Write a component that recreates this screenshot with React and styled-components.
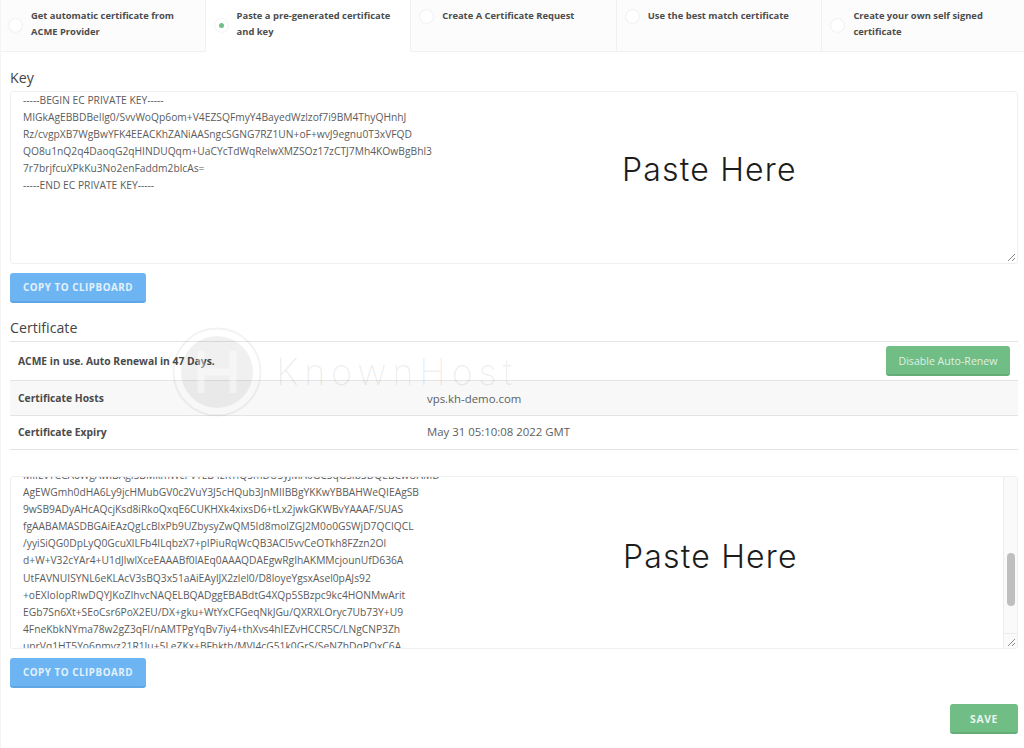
import React from 'react';
import styled, { createGlobalStyle } from 'styled-components';

const GlobalStyle = createGlobalStyle`
  html, body {
    margin: 0;
    padding: 0;
    background: #fff;
  }
  body {
    font-family: "Open Sans", "Liberation Sans", sans-serif;
    color: #555;
  }
  * {
    box-sizing: border-box;
  }
`;

const Page = styled.div`
  position: relative;
  width: 1024px;
  height: 748px;
  overflow: hidden;
  border-left: 1px solid #f4f4f4;
`;

const Tabs = styled.div`
  display: grid;
  grid-template-columns: repeat(4, 205.6px) 1fr;
  height: 52px;
  margin-left: -1px;
`;

const Tab = styled.div`
  display: flex;
  align-items: flex-start;
  padding: 8px 10px 0 9px;
  background: ${p => (p.$active ? '#fff' : '#fcfcfc')};
  border-right: 1px solid #f1f1f1;
  border-bottom: 1px solid ${p => (p.$active ? '#fff' : '#f1f1f1')};

  &:last-child {
    border-right: none;
  }
`;

const Radio = styled.span`
  flex: none;
  display: flex;
  align-items: center;
  justify-content: center;
  width: 13px;
  height: 13px;
  margin: ${p => (p.$twoLines ? '11px' : '2px')} 9px 0 0;
  border-radius: 50%;
  background: #fff;
  box-shadow: 0 0 2px rgba(0, 0, 0, 0.14);

  &::after {
    content: '';
    display: ${p => (p.$active ? 'block' : 'none')};
    width: 5px;
    height: 5px;
    border-radius: 50%;
    background: #6fbf87;
  }
`;

const TabLabel = styled.span`
  font-size: 9.4px;
  font-weight: 700;
  line-height: 16px;
  color: #4c4c4c;
`;

const Content = styled.div`
  padding: 0 6px 0 9px;
`;

const Heading = styled.h2`
  margin: 0;
  padding-top: ${p => p.$top}px;
  height: ${p => p.$top + 25}px;
  font-size: 14.2px;
  font-weight: 500;
  line-height: 24px;
  color: #444;
`;

const PasteBox = styled.div`
  position: relative;
  height: 173px;
  margin-top: ${p => p.$gap || 0}px;
  overflow: hidden;
  border: 1px solid #efefef;
  border-radius: 3px;
  background: #fff;
`;

const Code = styled.pre`
  margin: ${p => p.$offset}px 0 0;
  padding-left: 12px;
  font-family: "Open Sans", "Liberation Sans", sans-serif;
  font-size: 10.28px;
  line-height: 17.1px;
  color: #5c5c5c;
`;

const PasteHint = styled.div`
  position: absolute;
  left: ${p => p.$left}px;
  top: ${p => p.$top}px;
  font-family: Inter, "Open Sans", sans-serif;
  font-size: 32px;
  font-weight: 300;
  letter-spacing: 1.2px;
  line-height: 36px;
  white-space: nowrap;
  color: #1c1c1c;
`;

const Scrollbar = styled.div`
  position: absolute;
  top: 0;
  right: 0;
  bottom: 0;
  width: 14px;
  background: #fafafa;
  border-left: 1px solid #ececec;

  &::before {
    content: '';
    position: absolute;
    left: 3px;
    top: 76px;
    width: 8px;
    height: 53px;
    border-radius: 4px;
    background: #bfbfbf;
  }

  &::after {
    content: '';
    position: absolute;
    left: 0;
    right: 0;
    bottom: 14px;
    border-top: 1px solid #ececec;
  }
`;

const Grip = styled.svg`
  position: absolute;
  right: 1px;
  bottom: 1px;
  width: 9px;
  height: 9px;
`;

const CopyButton = styled.button`
  display: block;
  width: 136px;
  height: 30px;
  margin-top: 9px;
  padding: 1px 0 0;
  border: none;
  border-bottom: 2px solid #5ea6e4;
  border-radius: 3px;
  background: #6db5f2;
  font-family: inherit;
  font-size: 9.8px;
  font-weight: 700;
  letter-spacing: 0.55px;
  color: #e3f1fd;
`;

const Table = styled.div`
  border-top: 1px solid #e4e4e4;
`;

const Row = styled.div`
  display: grid;
  grid-template-columns: 409px 1fr;
  align-items: center;
  height: ${p => p.$height}px;
  padding-left: 8px;
  background: ${p => (p.$shaded ? '#f8f8f8' : 'transparent')};
  border-bottom: 1px solid #e4e4e4;
`;

const RenewRow = styled(Row)`
  display: flex;
  justify-content: space-between;
  padding-right: 8px;
`;

const ExpiryRow = styled(Row)`
  padding-bottom: 2px;
`;

const RowLabel = styled.span`
  font-size: 10.3px;
  font-weight: 700;
  color: #4a4a4a;
`;

const RowValue = styled.span`
  font-size: 11.4px;
  color: #606060;
`;

const RenewButton = styled.button`
  width: 124px;
  height: 30px;
  padding: 1px 0 0;
  border: none;
  border-bottom: 2px solid #64ad78;
  border-radius: 3px;
  background: #70bd85;
  font-family: inherit;
  font-size: 10.6px;
  color: #dff1e4;
`;

const Watermark = styled.div`
  position: absolute;
  left: 171px;
  top: 327px;
  display: flex;
  align-items: center;
  gap: 14px;
  pointer-events: none;
`;

const WatermarkName = styled.span`
  font-family: Inter, "Open Sans", sans-serif;
  font-size: 36px;
  font-weight: 200;
  line-height: 1;
  letter-spacing: 5.8px;
  color: rgba(0, 0, 0, 0.08);
`;

const SaveRow = styled.div`
  display: flex;
  justify-content: flex-end;
  margin-top: 16px;
`;

const SaveButton = styled.button`
  width: 68px;
  height: 30px;
  padding: 1px 0 0;
  border: none;
  border-bottom: 2px solid #64ad78;
  border-radius: 3px;
  background: #70bd85;
  font-family: inherit;
  font-size: 10.4px;
  font-weight: 700;
  letter-spacing: 0.6px;
  color: #eaf6ee;
`;

const tabs = [
  { label: 'Get automatic certificate from ACME Provider', twoLines: true },
  { label: 'Paste a pre-generated certificate and key', twoLines: true, active: true },
  { label: 'Create A Certificate Request' },
  { label: 'Use the best match certificate' },
  { label: 'Create your own self signed certificate', twoLines: true },
];

const keyText = `-----BEGIN EC PRIVATE KEY-----
MIGkAgEBBDBeIlg0/SvvWoQp6om+V4EZSQFmyY4BayedWzlzof7i9BM4ThyQHnhJ
Rz/cvgpXB7WgBwYFK4EEACKhZANiAASngcSGNG7RZ1UN+oF+wvJ9egnu0T3xVFQD
QO8u1nQ2q4DaoqG2qHINDUQqm+UaCYcTdWqRelwXMZSOz17zCTJ7Mh4KOwBgBhl3
7r7brjfcuXPkKu3No2enFaddm2blcAs=
-----END EC PRIVATE KEY-----`;

const certText = `MIIEvTCCA6WgAwIBAgISBMkmWcPv1EB4zKTiQ3mDU3yJMA0GCSqGSIb3DQEBCwUAMD
AgEWGmh0dHA6Ly9jcHMubGV0c2VuY3J5cHQub3JnMIIBBgYKKwYBBAHWeQIEAgSB
9wSB9ADyAHcAQcjKsd8iRkoQxqE6CUKHXk4xixsD6+tLx2jwkGKWBvYAAAF/SUAS
fgAABAMASDBGAiEAzQgLcBlxPb9UZbysyZwQM5Id8molZGJ2M0o0GSWjD7QCIQCL
/yyiSiQG0DpLyQ0GcuXlLFb4ILqbzX7+pIPiuRqWcQB3ACl5vvCeOTkh8FZzn2Ol
d+W+V32cYAr4+U1dJlwlXceEAAABf0lAEq0AAAQDAEgwRgIhAKMMcjounUfD636A
UtFAVNUISYNL6eKLAcV3sBQ3x51aAiEAylJX2zlel0/D8loyeYgsxAsel0pAJs92
+oEXIoIopRIwDQYJKoZIhvcNAQELBQADggEBABdtG4XQp5SBzpc9kc4HONMwArit
EGb7Sn6Xt+SEoCsr6PoX2EU/DX+gku+WtYxCFGeqNkJGu/QXRXLOryc7Ub73Y+U9
4FneKbkNYma78w2gZ3qFI/nAMTPgYqBv7iy4+thXvs4hIEZvHCCR5C/LNgCNP3Zh
uprVq1HT5Yo6nmvz21R1Ju+5LeZKx+BFhkth/MVI4cG51k0GrS/SeNZhDqPOxC6A`;

const ResizeGrip = () => (
  <Grip viewBox="0 0 9 9">
    <path d="M1 8 8 1M5 8 8 5" stroke="#8a8a8a" strokeWidth="1" fill="none" />
  </Grip>
);

const WatermarkLogo = () => (
  <svg width="90" height="90" viewBox="0 0 90 90">
    <circle cx="45" cy="45" r="43.5" fill="none" stroke="rgba(0,0,0,0.05)" strokeWidth="2" />
    <circle cx="45" cy="45" r="36" fill="rgba(0,0,0,0.06)" />
    <path d="M29 24v42M61 24v42M29 45h32" stroke="rgba(255,255,255,0.4)" strokeWidth="7" fill="none" />
  </svg>
);

const App = () => {
  return (
    <Page>
      <GlobalStyle />

      {/* Certificate source tabs */}
      <Tabs>
        {tabs.map(tab => (
          <Tab key={tab.label} $active={tab.active}>
            <Radio $active={tab.active} $twoLines={tab.twoLines} />
            <TabLabel>{tab.label}</TabLabel>
          </Tab>
        ))}
      </Tabs>

      <Content>
        <Heading $top={14}>Key</Heading>
        <PasteBox>
          <Code $offset={0}>{keyText}</Code>
          <PasteHint $left={611} $top={60}>Paste Here</PasteHint>
          <ResizeGrip />
        </PasteBox>
        <CopyButton>COPY TO CLIPBOARD</CopyButton>

        <Heading $top={13}>Certificate</Heading>
        <Table>
          <RenewRow $height={39}>
            <RowLabel>ACME in use. Auto Renewal in 47 Days.</RowLabel>
            <RenewButton>Disable Auto-Renew</RenewButton>
          </RenewRow>
          <Row $height={35} $shaded>
            <RowLabel>Certificate Hosts</RowLabel>
            <RowValue>vps.kh-demo.com</RowValue>
          </Row>
          <ExpiryRow $height={34}>
            <RowLabel>Certificate Expiry</RowLabel>
            <RowValue>May 31 05:10:08 2022 GMT</RowValue>
          </ExpiryRow>
        </Table>

        <PasteBox $gap={26}>
          <Code $offset={-10}>{certText}</Code>
          <PasteHint $left={612} $top={62}>Paste Here</PasteHint>
          <Scrollbar />
          <ResizeGrip />
        </PasteBox>
        <CopyButton>COPY TO CLIPBOARD</CopyButton>

        <SaveRow>
          <SaveButton>SAVE</SaveButton>
        </SaveRow>
      </Content>

      {/* Screenshot watermark sits over the table */}
      <Watermark>
        <WatermarkLogo />
        <WatermarkName>KnownHost</WatermarkName>
      </Watermark>
    </Page>
  );
};

export default App;
